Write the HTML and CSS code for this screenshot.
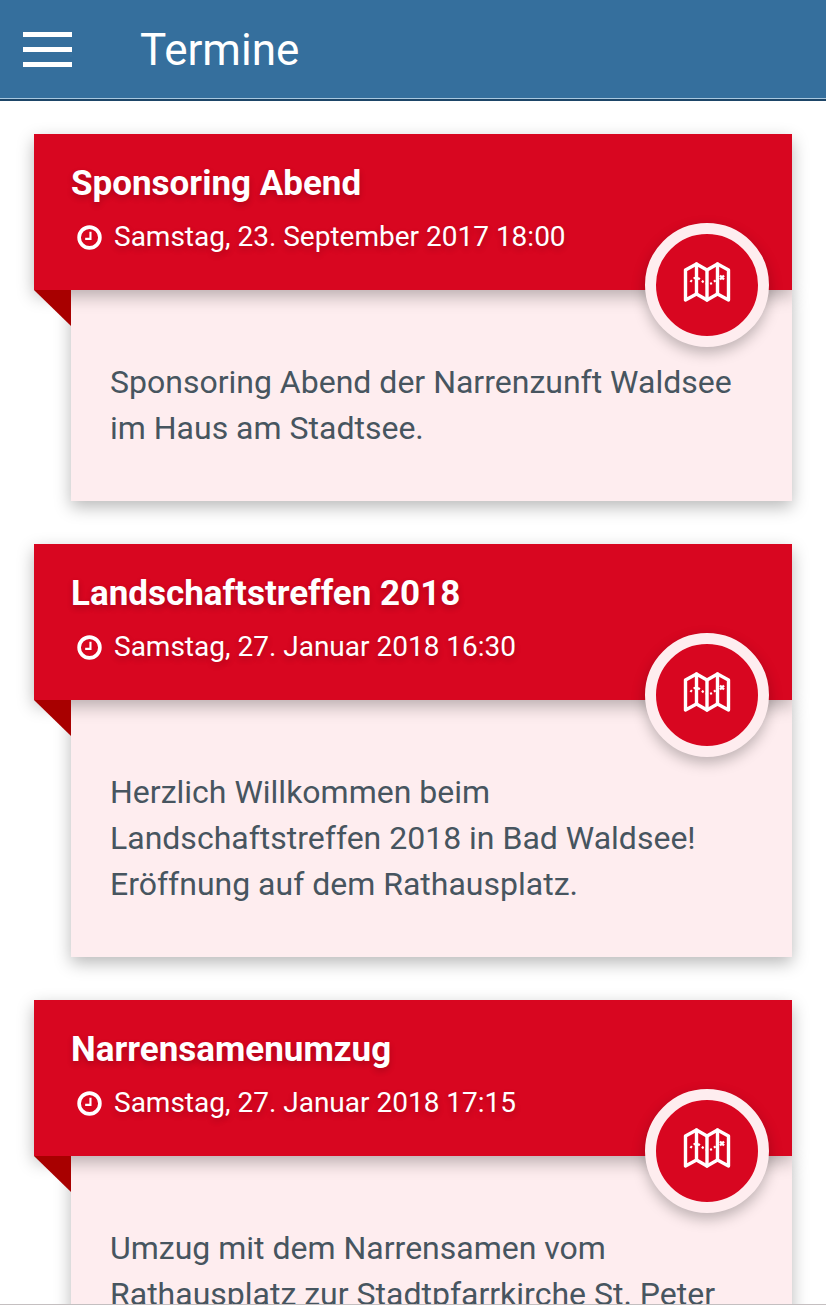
FILE: index.html
```html
<!DOCTYPE html>
<html lang="de">
<head>
<meta charset="utf-8">
<meta name="viewport" content="width=device-width, initial-scale=1">
<title>Termine</title>
<link rel="stylesheet" href="styles.css">
</head>
<body>
<svg class="sprite" aria-hidden="true">
  <symbol id="icon-clock" viewBox="0 0 26 26">
    <circle cx="13" cy="13" r="10.8" fill="none" stroke="currentColor" stroke-width="3.8"/>
    <path d="M14 7v7.400H8.500" fill="none" stroke="currentColor" stroke-width="2.200"/>
  </symbol>
  <symbol id="icon-map" viewBox="0 0 48 40">
    <g fill="none" stroke="currentColor" stroke-width="3.4" stroke-linejoin="round" stroke-linecap="round">
      <path d="M2.500 8 13.500 2 24 8 34.500 2 45.500 8V38L34.500 32 24 38 13.500 32 2.500 38Z"/>
      <path d="M13.500 2V32M24 8V38M34.500 2V32"/>
    </g>
    <path d="M7.500 20Q12 13 17 17.500T27 22Q31 20 35.500 16" fill="none" stroke="currentColor" stroke-width="2.200" stroke-dasharray="2.200 2.400"/>
    <path d="M37 13.500l4 4M41 13.500l-4 4" fill="none" stroke="currentColor" stroke-width="2.400"/>
  </symbol>
</svg>

<header class="appbar">
  <button class="menu-button" type="button" aria-label="Menü">
    <span class="menu-line"></span>
    <span class="menu-line"></span>
    <span class="menu-line"></span>
  </button>
  <h1 class="appbar-title">Termine</h1>
</header>

<main class="events">
  <article class="event">
    <header class="event-head">
      <h2 class="event-title">Sponsoring Abend</h2>
      <p class="event-date"><svg class="clock" aria-hidden="true"><use href="#icon-clock"/></svg><time datetime="2017-09-23T18:00">Samstag, 23. September 2017 18:00</time></p>
      <button class="map-button" type="button" aria-label="Karte anzeigen"><svg class="map-icon" aria-hidden="true"><use href="#icon-map"/></svg></button>
    </header>
    <div class="event-body">
      <p class="event-text">Sponsoring Abend der Narrenzunft Waldsee im Haus am Stadtsee.</p>
    </div>
  </article>

  <article class="event">
    <header class="event-head">
      <h2 class="event-title">Landschaftstreffen 2018</h2>
      <p class="event-date"><svg class="clock" aria-hidden="true"><use href="#icon-clock"/></svg><time datetime="2018-01-27T16:30">Samstag, 27. Januar 2018 16:30</time></p>
      <button class="map-button" type="button" aria-label="Karte anzeigen"><svg class="map-icon" aria-hidden="true"><use href="#icon-map"/></svg></button>
    </header>
    <div class="event-body">
      <p class="event-text">Herzlich Willkommen beim Landschaftstreffen 2018 in Bad Waldsee! Eröffnung auf dem Rathausplatz.</p>
    </div>
  </article>

  <article class="event">
    <header class="event-head">
      <h2 class="event-title">Narrensamenumzug</h2>
      <p class="event-date"><svg class="clock" aria-hidden="true"><use href="#icon-clock"/></svg><time datetime="2018-01-27T17:15">Samstag, 27. Januar 2018 17:15</time></p>
      <button class="map-button" type="button" aria-label="Karte anzeigen"><svg class="map-icon" aria-hidden="true"><use href="#icon-map"/></svg></button>
    </header>
    <div class="event-body">
      <p class="event-text">Umzug mit dem Narrensamen vom Rathausplatz zur Stadtpfarrkirche St. Peter</p>
    </div>
  </article>
</main>
</body>
</html>
```

FILE: styles.css
```css
:root {
  --bar: #356f9d;
  --red: #d80620;
  --fold: #a80000;
  --pink: #feedef;
  --ink: #47555f;
}

* {
  box-sizing: border-box;
}

body {
  display: flex;
  flex-direction: column;
  height: 100vh;
  margin: 0;
  background: #fff;
  color: var(--ink);
  font-family: Roboto, "Liberation Sans", sans-serif;
}

.sprite {
  position: absolute;
  width: 0;
  height: 0;
}

.appbar {
  display: flex;
  flex: none;
  align-items: center;
  gap: 68px;
  height: 101px;
  padding: 0 23px;
  background: var(--bar);
  border-bottom: 2px solid #1d4567;
  box-shadow: inset 0 -1px #a9c8df;
}

.menu-button {
  display: flex;
  flex-direction: column;
  gap: 10px;
  width: 49px;
  padding: 0;
  border: 0;
  background: none;
  cursor: pointer;
}

.menu-line {
  height: 5px;
  background: #fff;
}

.appbar-title {
  margin: 0;
  color: #fff;
  font-size: 44px;
  font-weight: 400;
  line-height: 52px;
}

.events {
  display: flex;
  flex: 1;
  flex-direction: column;
  gap: 43px;
  min-height: 0;
  padding: 33px 34px 43px;
  overflow-y: auto;
  scrollbar-width: none;
  border-bottom: 1px solid #c4bfc0;
}

.event {
  flex: none;
}

.event-head {
  position: relative;
  padding: 27px 37px 33px;
  background: var(--red);
  color: #fff;
  box-shadow: 0 6px 16px rgba(0, 0, 0, 0.28);
  text-shadow: 0 3px 6px rgba(0, 0, 0, 0.2);
}

/* Folded ribbon corner below the left edge of the heading */
.event-head::after {
  content: "";
  position: absolute;
  top: 100%;
  left: 0;
  width: 37px;
  height: 36px;
  background: var(--fold);
  clip-path: polygon(0 0, 100% 0, 100% 100%);
}

.event-title {
  margin: 0;
  font-size: 35px;
  font-weight: 700;
  line-height: 46px;
}

.event-date {
  display: flex;
  align-items: center;
  gap: 12px;
  margin: 10px 0 0;
  padding-left: 6px;
  font-size: 28px;
  line-height: 40px;
}

.clock {
  flex: none;
  width: 25px;
  height: 25px;
}

.map-button {
  position: absolute;
  right: 23px;
  bottom: -57px;
  display: grid;
  place-items: center;
  width: 124px;
  height: 124px;
  padding: 0;
  border: 11px solid var(--pink);
  border-radius: 50%;
  background: var(--red);
  color: #fff;
  box-shadow: 0 6px 14px rgba(0, 0, 0, 0.25);
  cursor: pointer;
}

.map-icon {
  width: 48px;
  height: 40px;
  margin-bottom: 7px;
}

.event-body {
  margin-left: 37px;
  padding: 69px 39px 50px;
  background: var(--pink);
  box-shadow: 0 6px 16px rgba(0, 0, 0, 0.28);
}

.event-text {
  margin: 0;
  font-size: 32px;
  line-height: 46px;
}
```
